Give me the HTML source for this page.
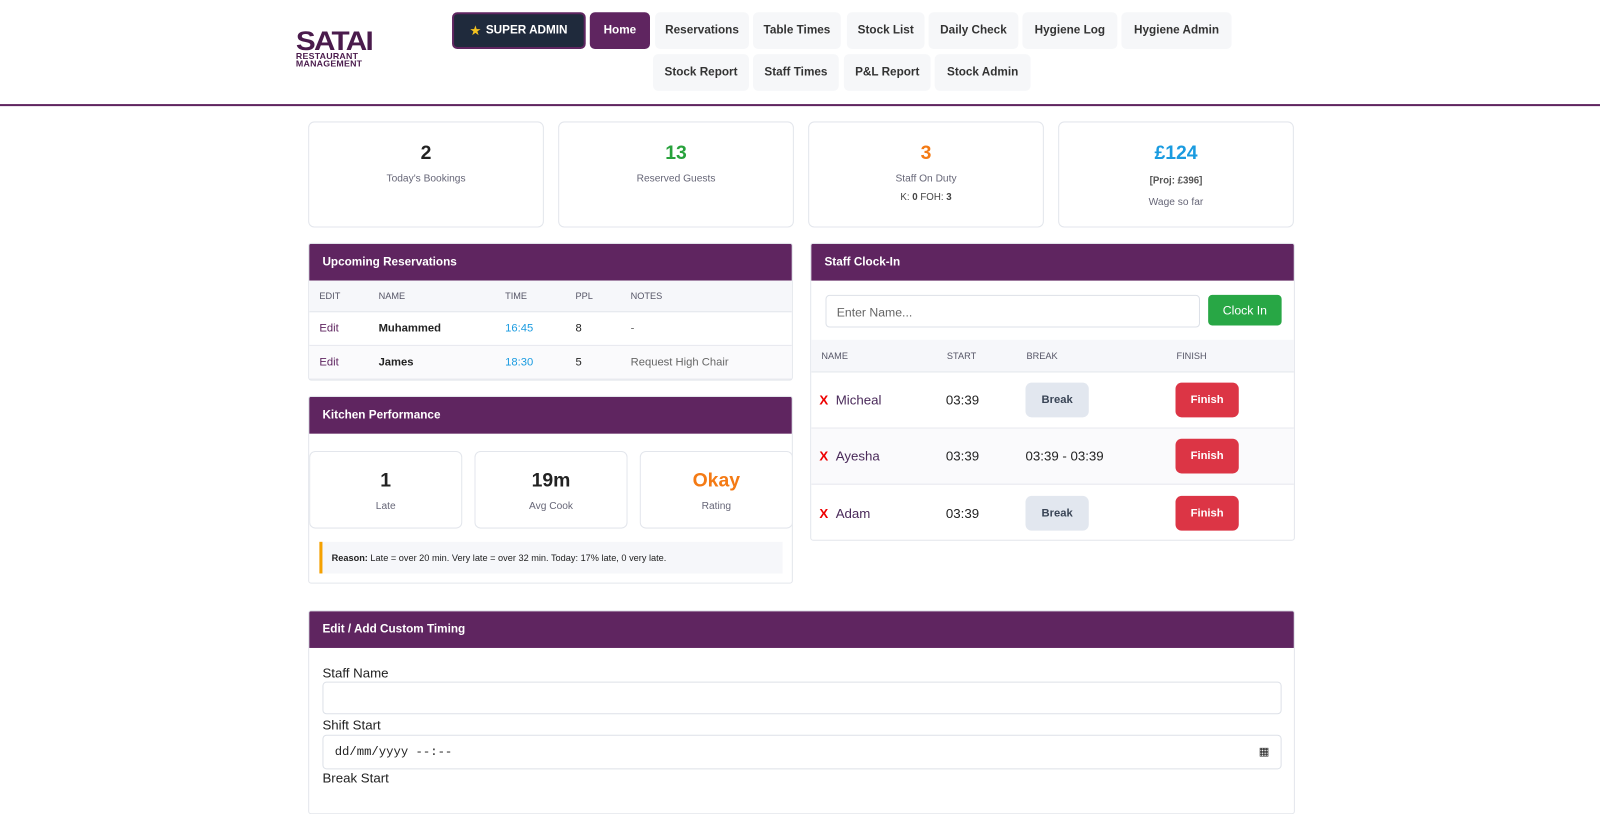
<!DOCTYPE html>
<html><head><style>
*{box-sizing:border-box;margin:0;padding:0}
body{width:1600px;height:784px;overflow:hidden;background:#fff;font-family:"Liberation Sans",sans-serif;color:#222;position:relative}
#w{position:absolute;left:0;top:0;width:1568px;height:770px;transform:scale(1.0204);transform-origin:0 0}
.a{position:absolute}
.logo1{left:290px;top:28px;font-weight:900;font-size:26px;color:#4a1b4c;letter-spacing:-1.5px;line-height:24px;transform:scaleX(1.12);transform-origin:0 0}
.logo2{left:290px;top:52px;font-weight:bold;font-size:8px;color:#4a1b4c;line-height:7px;letter-spacing:.2px;transform:scaleX(1.08);transform-origin:0 0}
.nb{position:absolute;height:36px;background:#f6f7f9;border-radius:5px;font-size:11.5px;font-weight:bold;color:#333;display:flex;align-items:center;justify-content:center;white-space:nowrap}
.hr{left:0;top:102px;width:1568px;height:2px;background:#5f2560}
.card{position:absolute;border:1px solid #e3e6ec;border-radius:6px;text-align:center;background:#fff}
.big{font-size:19px;font-weight:bold;margin-top:20px}
.sm{font-size:10px;color:#667;margin-top:8px}
.panel{position:absolute;border:1px solid #e3e6ec;border-radius:3px;background:#fff;overflow:hidden}
.ph{height:36px;background:#5f2560;color:#fff;font-size:11.5px;font-weight:bold;padding:0 13px;display:flex;align-items:center}
.th{background:#f6f7fa;font-size:9px;color:#556;height:31px;position:relative;border-bottom:1px solid #e3e6ec}
.th span,.tr span{position:absolute;top:50%;transform:translateY(-50%)}
.tr{position:relative;border-bottom:1px solid #e6e8ee;font-size:11px}
.btn{position:absolute;border-radius:6px;font-size:11px;font-weight:bold;display:flex;align-items:center;justify-content:center;top:50%;transform:translateY(-50%);height:34px}
</style></head><body><div id="w">
<div class="a logo1">SATAI</div>
<div class="a logo2">RESTAURANT<br>MANAGEMENT</div>
<div class="nb" style="left:443px;top:12px;width:131px;background:#1f2a3c;color:#fff;border:2px solid #5f2560;font-weight:900"><span style="color:#f4c21f;margin-right:5px">★</span>SUPER ADMIN</div>
<div class="nb" style="left:578px;top:12px;width:59px;background:#5f2560;color:#fff">Home</div>
<div class="nb" style="left:642px;top:12px;width:92px">Reservations</div>
<div class="nb" style="left:738px;top:12px;width:86px">Table Times</div>
<div class="nb" style="left:830px;top:12px;width:76px">Stock List</div>
<div class="nb" style="left:910px;top:12px;width:88px">Daily Check</div>
<div class="nb" style="left:1002px;top:12px;width:93px">Hygiene Log</div>
<div class="nb" style="left:1099px;top:12px;width:108px">Hygiene Admin</div>
<div class="nb" style="left:640px;top:53px;width:94px">Stock Report</div>
<div class="nb" style="left:738px;top:53px;width:84px">Staff Times</div>
<div class="nb" style="left:827px;top:53px;width:85px">P&amp;L Report</div>
<div class="nb" style="left:916px;top:53px;width:94px">Stock Admin</div>
<div class="a hr"></div>

<div class="card" style="left:302px;top:119px;width:231px;height:104px"><div class="big">2</div><div class="sm">Today's Bookings</div></div>
<div class="card" style="left:547px;top:119px;width:231px;height:104px"><div class="big" style="color:#28a23c">13</div><div class="sm">Reserved Guests</div></div>
<div class="card" style="left:792px;top:119px;width:231px;height:104px"><div class="big" style="color:#f47a14">3</div><div class="sm">Staff On Duty</div><div style="font-size:9.5px;color:#444;margin-top:7px">K: <b>0</b> FOH: <b>3</b></div></div>
<div class="card" style="left:1037px;top:119px;width:231px;height:104px"><div class="big" style="color:#1a9be0">£124</div><div style="font-size:9.5px;color:#555;font-weight:bold;margin-top:10px">[Proj: £396]</div><div class="sm" style="margin-top:10px">Wage so far</div></div>

<div class="panel" style="left:302px;top:238px;width:475px;height:135px">
<div class="ph">Upcoming Reservations</div>
<div class="th"><span style="left:10px">EDIT</span><span style="left:68px">NAME</span><span style="left:192px">TIME</span><span style="left:261px">PPL</span><span style="left:315px">NOTES</span></div>
<div class="tr" style="height:33px"><span style="left:10px;color:#5f2560">Edit</span><span style="left:68px;font-weight:bold">Muhammed</span><span style="left:192px;color:#1a9be0">16:45</span><span style="left:261px">8</span><span style="left:315px;color:#666">-</span></div>
<div class="tr" style="height:33px;background:#fafafc"><span style="left:10px;color:#5f2560">Edit</span><span style="left:68px;font-weight:bold">James</span><span style="left:192px;color:#1a9be0">18:30</span><span style="left:261px">5</span><span style="left:315px;color:#666">Request High Chair</span></div>
</div>

<div class="panel" style="left:302px;top:388px;width:475px;height:184px">
<div class="ph">Kitchen Performance</div>
<div class="card" style="left:0;top:53px;width:150px;height:76px"><div class="big" style="margin-top:18px">1</div><div class="sm">Late</div></div>
<div class="card" style="left:162px;top:53px;width:150px;height:76px"><div class="big" style="margin-top:18px">19m</div><div class="sm">Avg Cook</div></div>
<div class="card" style="left:324px;top:53px;width:150px;height:76px"><div class="big" style="margin-top:18px;color:#f47a14">Okay</div><div class="sm">Rating</div></div>
<div class="a" style="left:10px;top:142px;width:454px;height:31px;background:#f6f7fa;border-left:3px solid #f5a100;font-size:9px;padding:11px 9px">
<b>Reason:</b> Late = over 20 min. Very late = over 32 min. Today: 17% late, 0 very late.</div>
</div>

<div class="panel" style="left:794px;top:238px;width:475px;height:292px">
<div class="ph">Staff Clock-In</div>
<div class="a" style="left:14px;top:50px;width:367px;height:32px;border:1px solid #dde1e8;border-radius:4px;font-size:12px;color:#666;padding:9px 10px">Enter Name...</div>
<div class="a" style="left:389px;top:50px;width:72px;height:30px;background:#28a745;border-radius:4px;color:#fff;font-size:12px;display:flex;align-items:center;justify-content:center">Clock In</div>
<div class="a" style="left:0;top:94px;width:475px">
<div class="th" style="height:32px"><span style="left:10px">NAME</span><span style="left:133px">START</span><span style="left:211px">BREAK</span><span style="left:358px">FINISH</span></div>
<div class="tr" style="height:55px;font-size:13px"><span style="left:8px;color:#e00;font-weight:bold">X</span><span style="left:24px;color:#4a2a5a">Micheal</span><span style="left:132px">03:39</span><div class="btn" style="left:210px;width:62px;background:#e2e7ef;color:#3a4556">Break</div><div class="btn" style="left:357px;width:62px;background:#dc3545;color:#fff">Finish</div></div>
<div class="tr" style="height:55px;font-size:13px;background:#fafafc"><span style="left:8px;color:#e00;font-weight:bold">X</span><span style="left:24px;color:#4a2a5a">Ayesha</span><span style="left:132px">03:39</span><span style="left:210px">03:39 - 03:39</span><div class="btn" style="left:357px;width:62px;background:#dc3545;color:#fff">Finish</div></div>
<div class="tr" style="height:55px;font-size:13px;border:0"><span style="left:8px;color:#e00;font-weight:bold">X</span><span style="left:24px;color:#4a2a5a">Adam</span><span style="left:132px">03:39</span><div class="btn" style="left:210px;width:62px;background:#e2e7ef;color:#3a4556">Break</div><div class="btn" style="left:357px;width:62px;background:#dc3545;color:#fff">Finish</div></div>
</div>
</div>

<div class="panel" style="left:302px;top:598px;width:967px;height:200px">
<div class="ph">Edit / Add Custom Timing</div>
<div class="a" style="left:13px;top:53px;font-size:13px">Staff Name</div>
<div class="a" style="left:13px;top:69px;width:940px;height:32px;border:1px solid #dde1e8;border-radius:4px"></div>
<div class="a" style="left:13px;top:104px;font-size:13px">Shift Start</div>
<div class="a" style="left:13px;top:121px;width:940px;height:34px;border:1px solid #dde1e8;border-radius:4px;font-family:'Liberation Mono',monospace;font-size:12px;padding:9px 11px">dd/mm/yyyy --:--<span style="position:absolute;right:11px;top:9px;font-family:'DejaVu Sans';font-size:11px">▦</span></div>
<div class="a" style="left:13px;top:156px;font-size:13px">Break Start</div>
</div>
</div></body></html>
